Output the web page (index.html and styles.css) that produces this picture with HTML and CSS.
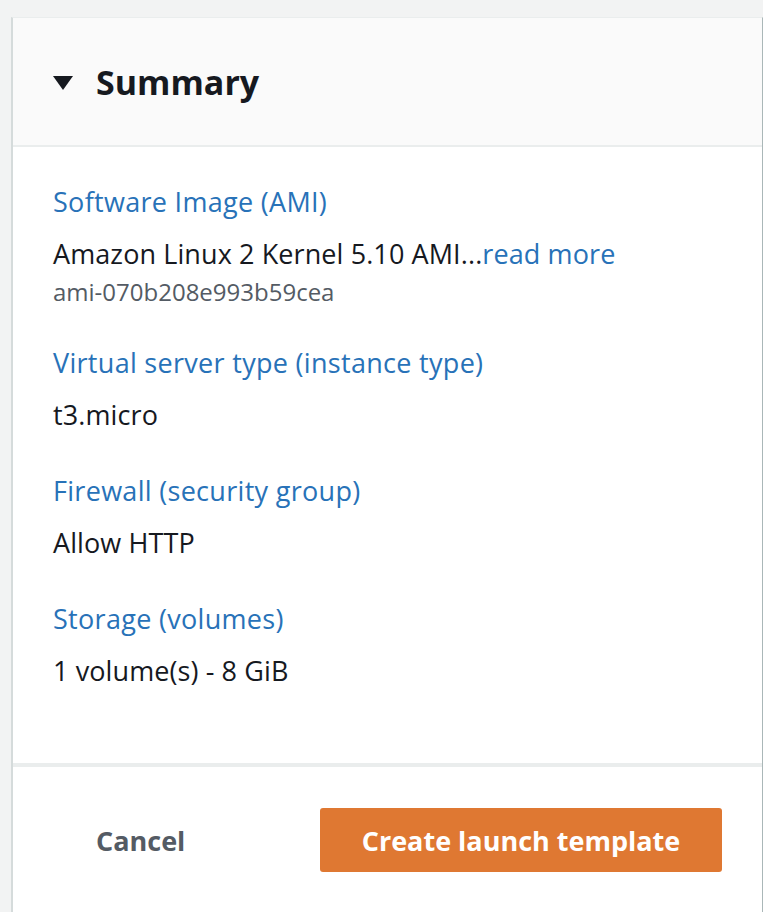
FILE: index.html
```html
<!DOCTYPE html>
<html lang="en">
<head>
<meta charset="utf-8">
<title>Summary</title>
<link rel="stylesheet" href="styles.css">
</head>
<body>
<div class="card">
  <div class="card-header">
    <svg class="caret" width="20" height="16" viewBox="0 0 20 16"><polygon points="0,1 20,1 10,15" fill="#16191f"/></svg>
    <h2 class="title">Summary</h2>
  </div>
  <div class="card-body">
    <div class="item">
      <div class="label">Software Image (AMI)</div>
      <div class="value">Amazon Linux 2 Kernel 5.10 AMI...<span class="link">read more</span></div>
      <div class="sub">ami-070b208e993b59cea</div>
    </div>
    <div class="item">
      <div class="label">Virtual server type (instance type)</div>
      <div class="value">t3.micro</div>
    </div>
    <div class="item">
      <div class="label">Firewall (security group)</div>
      <div class="value">Allow HTTP</div>
    </div>
    <div class="item">
      <div class="label">Storage (volumes)</div>
      <div class="value">1 volume(s) - 8 GiB</div>
    </div>
  </div>
  <div class="card-footer">
    <button class="btn-link">Cancel</button>
    <button class="btn-primary">Create launch template</button>
  </div>
</div>
</body>
</html>
```
FILE: styles.css
```css
html, body {
  margin: 0;
  padding: 0;
  background: #f2f3f3;
  height: 100%;
  overflow: hidden;
}
body {
  font-family: "Open Sans", "Noto Sans", sans-serif;
  color: #16191f;
}
.card {
  margin: 17px 0 0 11px;
  width: 749px;
  background: #ffffff;
  border-left: 2px solid #d5dbdb;
  border-top: 1px solid #eaeded;
  border-right: 1px solid #aab7b8;
  min-height: 900px;
}
.card-header {
  height: 129px;
  background: #fafafa;
  border-bottom: 2px solid #eaeded;
  display: flex;
  align-items: center;
  padding-left: 40px;
  box-sizing: border-box;
}
.caret {
  margin-right: 23px;
  margin-top: 2px;
}
.title {
  margin: 0;
  font-size: 34px;
  font-weight: 700;
  line-height: 1;
  color: #16191f;
}
.card-body {
  height: 616px;
  box-sizing: border-box;
  padding: 37px 40px 0 40px;
  display: flex;
  flex-direction: column;
  gap: 40px;
}
.label {
  font-size: 27px;
  line-height: 36px;
  letter-spacing: 0.3px;
  color: #2872b8;
}
.value {
  font-size: 27px;
  line-height: 36px;
  margin-top: 16px;
  letter-spacing: 0.1px;
  color: #16191f;
}
.link {
  color: #2872b8;
}
.sub {
  font-size: 24px;
  line-height: 26px;
  color: #545b64;
  margin-top: 7px;
}
.card-footer {
  border-top: 4px solid #eaeded;
  display: flex;
  align-items: center;
  padding: 41px 40px 0 83px;
}
.btn-link {
  background: none;
  border: none;
  padding: 0;
  font-family: "Open Sans", sans-serif;
  font-size: 27px;
  font-weight: 700;
  color: #545b64;
  margin-right: auto;
}
.btn-primary {
  width: 402px;
  height: 64px;
  background: #df7832;
  border: none;
  border-radius: 3px;
  color: #ffffff;
  font-family: "Open Sans", sans-serif;
  font-size: 27px;
  font-weight: 700;
}
```
